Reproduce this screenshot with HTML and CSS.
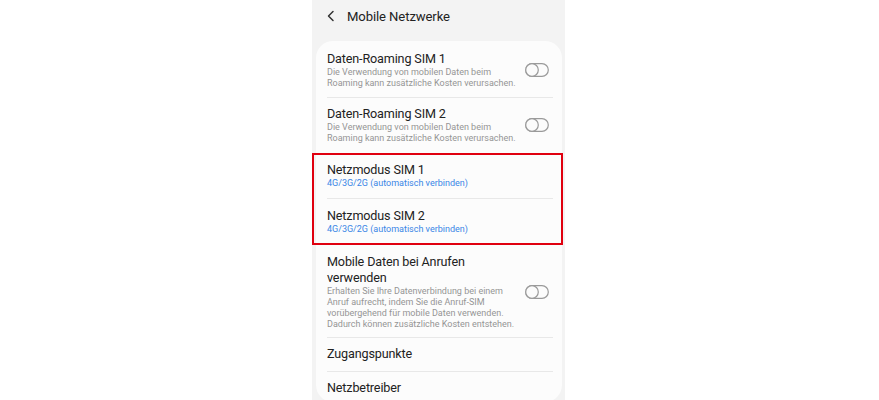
FILE: index.html
```html
<!DOCTYPE html>
<html lang="de">
<head>
<meta charset="utf-8">
<title>Mobile Netzwerke</title>
<link rel="stylesheet" href="styles.css">
</head>
<body>
<div class="page">
  <div class="phone">
    <header class="header">
      <svg class="back" width="10" height="12" viewBox="0 0 10 12"><path d="M7 1.5 L2.5 6 L7 10.5" fill="none" stroke="#333" stroke-width="1.5" stroke-linecap="round" stroke-linejoin="round"/></svg>
      <span class="header-title">Mobile Netzwerke</span>
    </header>
    <div class="card">
      <div class="item item-first">
        <div class="text">
          <div class="title">Daten-Roaming SIM 1</div>
          <div class="desc">Die Verwendung von mobilen Daten beim<br>Roaming kann zusätzliche Kosten verursachen.</div>
        </div>
        <svg class="toggle" width="24" height="14" viewBox="0 0 24 14"><rect x="0.7" y="0.7" width="22.6" height="12.6" rx="6.3" fill="none" stroke="#9a9a9a" stroke-width="1.2"/><circle cx="7" cy="7" r="6.3" fill="#fbfbfb" stroke="#9a9a9a" stroke-width="1.2"/></svg>
      </div>
      <div class="item">
        <div class="text">
          <div class="title">Daten-Roaming SIM 2</div>
          <div class="desc">Die Verwendung von mobilen Daten beim<br>Roaming kann zusätzliche Kosten verursachen.</div>
        </div>
        <svg class="toggle" width="24" height="14" viewBox="0 0 24 14"><rect x="0.7" y="0.7" width="22.6" height="12.6" rx="6.3" fill="none" stroke="#9a9a9a" stroke-width="1.2"/><circle cx="7" cy="7" r="6.3" fill="#fbfbfb" stroke="#9a9a9a" stroke-width="1.2"/></svg>
      </div>
      <div class="item item-mode">
        <div class="text">
          <div class="title">Netzmodus SIM 1</div>
          <div class="sub">4G/3G/2G (automatisch verbinden)</div>
        </div>
      </div>
      <div class="item item-mode item-mode-2">
        <div class="text">
          <div class="title">Netzmodus SIM 2</div>
          <div class="sub">4G/3G/2G (automatisch verbinden)</div>
        </div>
      </div>
      <div class="item item-tall">
        <div class="text">
          <div class="title">Mobile Daten bei Anrufen<br>verwenden</div>
          <div class="desc">Erhalten Sie Ihre Datenverbindung bei einem<br>Anruf aufrecht, indem Sie die Anruf-SIM<br>vorübergehend für mobile Daten verwenden.<br>Dadurch können zusätzliche Kosten entstehen.</div>
        </div>
        <svg class="toggle" width="24" height="14" viewBox="0 0 24 14"><rect x="0.7" y="0.7" width="22.6" height="12.6" rx="6.3" fill="none" stroke="#9a9a9a" stroke-width="1.2"/><circle cx="7" cy="7" r="6.3" fill="#fbfbfb" stroke="#9a9a9a" stroke-width="1.2"/></svg>
      </div>
      <div class="item item-single">
        <div class="text"><div class="title">Zugangspunkte</div></div>
      </div>
      <div class="item item-single item-last">
        <div class="text"><div class="title">Netzbetreiber</div></div>
      </div>
    </div>
    <div class="highlight"></div>
  </div>
</div>
</body>
</html>
```
FILE: styles.css
```css
html, body {
  margin: 0;
  padding: 0;
  background: #ffffff;
}
body {
  font-family: Roboto, "Noto Sans", "Liberation Sans", sans-serif;
  color: #222;
}
.page {
  width: 879px;
  height: 400px;
  overflow: hidden;
  display: flex;
  justify-content: center;
}
.phone {
  position: relative;
  width: 253px;
  margin-right: 2px;
  background: #f3f3f3;
  display: flex;
  flex-direction: column;
  align-items: flex-start;
  height: 400px;
}
.header {
  width: 100%;
  height: 41px;
  box-sizing: border-box;
  display: flex;
  align-items: center;
  padding: 0 0 9px 14px;
  gap: 11px;
  flex: none;
}
.back { flex: none; }
.header-title {
  font-size: 13.1px;
  color: #222;
  letter-spacing: -0.1px;
}
.card {
  width: 246px;
  margin-left: 4px;
  background: #fcfcfc;
  border-radius: 17px;
  box-sizing: border-box;
  padding: 0 9px 0 11px;
  flex: none;
}
.item {
  display: flex;
  align-items: center;
  justify-content: space-between;
  padding: 8px 0 9px 0;
  border-bottom: 1px solid #e8e8e8;
}
.item-first { padding: 10px 0 8px 0; }
.item-mode { padding: 8px 0 9px 0; }
.item-mode-2 { padding: 9px 0 9px 0; }
.item-tall { padding: 9px 0 7px 0; }
.item-single { padding: 8px 0 9px 0; }
.item-last { border-bottom: none; padding-bottom: 6px; }
.text { display: flex; flex-direction: column; }
.title {
  font-size: 12.6px;
  line-height: 16px;
  color: #222;
  letter-spacing: -0.15px;
}
.desc {
  font-size: 9px;
  line-height: 11px;
  color: #959595;
}
.sub {
  font-size: 9px;
  line-height: 11px;
  color: #3a86e6;
}
.toggle {
  flex: none;
  margin-right: 4px;
}
.highlight {
  position: absolute;
  left: 0;
  top: 153px;
  width: 251px;
  height: 92px;
  box-sizing: border-box;
  border: 2px solid #e0000f;
}
```
